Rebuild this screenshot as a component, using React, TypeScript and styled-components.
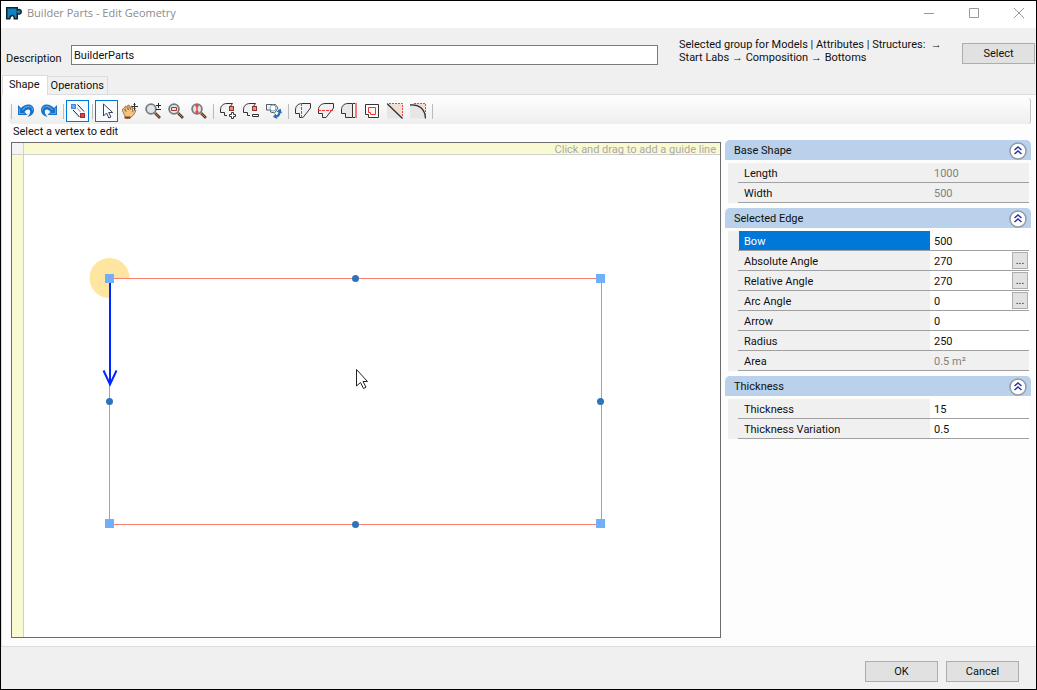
import React, { useState } from 'react';
import styled, { createGlobalStyle, css } from 'styled-components';

const GlobalStyle = createGlobalStyle`
  *, *::before, *::after { box-sizing: border-box; }
  body {
    margin: 0;
    background: #f0f0f0;
    color: #101010;
    font: 11px/14px Roboto, "Liberation Sans", sans-serif;
  }
  button, input { font: inherit; color: inherit; }
`;

const Window = styled.div`
  display: flex;
  flex-direction: column;
  min-height: 100vh;
  border: 1px solid #000;
  background: #f0f0f0;
`;

const TitleBar = styled.header`
  display: flex;
  align-items: center;
  height: 27px;
  padding: 0 11px 4px 5px;
  background: #fff;
`;

const Title = styled.h1`
  flex: 1;
  margin: 0 0 0 5px;
  font: 11px/16px "Open Sans", "Noto Sans", sans-serif;
  color: #8c8c8c;
`;

const WindowControls = styled.div`
  display: flex;
  gap: 33px;
`;

const WindowButton = styled.button`
  display: flex;
  width: 12px;
  height: 12px;
  padding: 0;
  border: 0;
  background: none;
`;

const DetailsBar = styled.div`
  display: flex;
  align-items: flex-start;
  height: 47px;
  padding: 9px 1px 0 5px;
`;

const DescriptionLabel = styled.label`
  width: 65px;
  margin-top: 15px;
`;

const DescriptionInput = styled.input`
  flex: 1;
  min-width: 0;
  height: 20px;
  margin-top: 8px;
  padding: 0 2px;
  border: 1px solid #7a7a7a;
  background: #fff;
`;

const GroupPath = styled.p`
  width: 272px;
  margin: 1px 11px 0 21px;
  line-height: 13px;
  white-space: nowrap;
`;

const PathArrow = styled.span`
  font-family: "Liberation Sans", sans-serif;
`;

const PushButton = styled.button`
  width: 73px;
  height: 21px;
  padding: 0;
  border: 1px solid #adadad;
  background: #e1e1e1;
`;

const SelectButton = styled(PushButton)`
  margin-top: 6px;
`;

const TabStrip = styled.div`
  display: flex;
  align-items: flex-end;
  height: 20px;
  padding-left: 1px;
  border-bottom: 1px solid #dcdcdc;
`;

const Tab = styled.button<{ $active?: boolean }>`
  height: ${p => (p.$active ? 20 : 18)}px;
  margin-bottom: ${p => (p.$active ? -1 : 0)}px;
  padding: ${p => (p.$active ? '0 7px 2px 6px' : '0 3px')};
  border: 1px solid #dcdcdc;
  border-bottom: 0;
  border-left-width: ${p => (p.$active ? 1 : 0)}px;
  background: ${p => (p.$active ? '#fff' : '#f0f0f0')};
`;

const Page = styled.main`
  display: flex;
  flex: 1;
  flex-direction: column;
  padding: 3px 5px 8px 7px;
  border-left: 1px solid #dcdcdc;
  border-bottom: 1px solid #dcdcdc;
  background: #fdfdfd;
`;

const Toolbar = styled.div`
  display: flex;
  align-items: center;
  height: 26px;
  border-right: 1px solid #c4c4c4;
  border-radius: 3px;
  background: linear-gradient(#fdfdfd, #eeeeee);
`;

const Separator = styled.span<{ $first?: boolean }>`
  width: 1px;
  height: 15px;
  margin: 0 2px 0 ${p => (p.$first ? 2 : 3)}px;
  background: #b9bcbc;
`;

const ToolButton = styled.button<{ $pressed?: boolean }>`
  display: flex;
  align-items: center;
  justify-content: center;
  width: 23px;
  height: 22px;
  padding: 0;
  border: 1px solid ${p => (p.$pressed ? '#0078d7' : 'transparent')};
  background: ${p => (p.$pressed ? '#f8fbfd' : 'none')};
`;

const Hint = styled.p`
  margin: 0;
  padding: 1px 4px 3px;
`;

const Workspace = styled.div`
  display: flex;
  flex: 1;
  padding-left: 2px;
`;

const DrawingArea = styled.section`
  position: relative;
  display: grid;
  flex: 1;
  grid-template: 12px 1fr / 12px 1fr;
  min-width: 0;
  border: 1px solid #6c6c6c;
  background: #fff;
`;

const RulerCorner = styled.div`
  border: solid #d0d0d0;
  border-width: 0 1px 1px 0;
  background: #f4f4f4;
`;

const TopRuler = styled.div`
  padding-right: 4px;
  border-bottom: 1px solid #d0d0d0;
  background: #fafad2;
  color: #a9a9a9;
  line-height: 14px;
  text-align: right;
`;

const SideRuler = styled.div`
  border-right: 1px solid #d0d0d0;
  background: #fafad2;
`;

const Drawing = styled.svg`
  position: absolute;
  top: 0;
  left: 0;
  width: 100%;
  height: 100%;
`;

const Properties = styled.aside`
  display: flex;
  flex-direction: column;
  gap: 5px;
  width: 306px;
  margin: -2px 0 0 4px;
`;

const GroupHeader = styled.h2`
  display: flex;
  align-items: center;
  justify-content: space-between;
  height: 20px;
  margin: 0 0 3px;
  padding: 2px 4px 0 9px;
  border-radius: 5px 5px 0 0;
  background: #b9d1ea;
  font: inherit;
`;

const CollapseButton = styled.button`
  display: flex;
  width: 18px;
  height: 18px;
  padding: 0;
  border: 0;
  background: none;
`;

const Rows = styled.div`
  margin: 0 2px 0 3px;
  padding-left: 10px;
  background: #f0f0f0;
`;

const Row = styled.div`
  display: flex;
  height: 20px;
  border-bottom: 1px solid #a0a0a0;
`;

const RowLabel = styled.label<{ $selected?: boolean }>`
  flex: 1;
  padding: 4px 0 0 6px;
  ${p => p.$selected && css`
    border-left: 1px solid #f0f0f0;
    padding-left: 5px;
    background: #0078d7;
    color: #fff;
  `}
`;

const RowValue = styled.div<{ $locked?: boolean }>`
  display: flex;
  width: 99px;
  padding-right: 1px;
  background: ${p => (p.$locked ? '#f0f0f0' : '#fff')};
`;

const ValueInput = styled.input`
  flex: 1;
  min-width: 0;
  padding: 3px 4px 0;
  border: 0;
  background: none;
  &:read-only { color: #808080; }
  &:focus { outline: none; }
`;

const MoreButton = styled.button`
  width: 16px;
  height: 17px;
  margin-top: 1px;
  padding: 0;
  border: 1px solid #adadad;
  background: #e1e1e1;
`;

const Footer = styled.footer`
  display: flex;
  justify-content: flex-end;
  gap: 8px;
  padding: 14px 17px 7px;
`;

const shapeOutline = 'M.5 10.500V7C.5 3 3 .7 7 .5h8.500v4.500L8 14.500H4.500v-4z';

function Icon({ children }: { children: React.ReactNode }) {
  return <svg width="16" height="16" viewBox="0 0 16 16" fill="none" aria-hidden="true">{children}</svg>;
}

function Lens({ children }: { children: React.ReactNode }) {
  return (
    <Icon>
      <path d="M10 10l5 5" stroke="#5a3a2a" strokeWidth="2.600" />
      <path d="M10 10l4.500 4.500" stroke="#a77b56" />
      <circle cx="6" cy="6" r="4.900" fill="#dfe4e6" stroke="#777b7e" strokeWidth="1.800" />
      {children}
    </Icon>
  );
}

const UndoArrow = () => (
  <>
    <path d="M0 2v10h9.500L6.500 9C8 6 12 5.500 12.200 8.500c.1 2-1 3.500-3 5.500C13.500 13 16 10.500 16 7 16 .5 7.500-.5 3 5z" fill="#1672c8" />
    <path d="M1.500 5v5.500h5M4.500 7c4-5.500 10.300-4 10 .5" stroke="#4fa3ea" strokeWidth="1.200" />
  </>
);

const icons: Record<string, React.ReactNode> = {
  Undo: <Icon><UndoArrow /></Icon>,
  Redo: <Icon><g transform="matrix(-1 0 0 1 16 0)"><UndoArrow /></g></Icon>,
  'Edit vertices': (
    <Icon>
      <rect x="1.500" y="1.500" width="4" height="4" fill="#70abf5" stroke="#4c87cf" />
      <rect x="10.500" y="10.500" width="4" height="4" fill="#d94343" stroke="#a92c2c" />
      <path d="M7.500 1.500l6.500 7M3 7l6.500 7" stroke="#222" />
      <path d="M7.500 5.500l3 3.500" stroke="#555" strokeDasharray="1.500 1" />
    </Icon>
  ),
  Pointer: <Icon><path d="M4.500 1v12l3-3 2.300 5 2.200-1-2.300-4.500h4z" fill="#fff" stroke="#34415e" /></Icon>,
  Pan: (
    <Icon>
      <path d="M0 6.500l1.500-1 2.500 3L2.500 4 4 3l2.500 4-1-4.500L7 2l1.500 4.500.5-3.500 1.500.5v5l2.500-1.500 1 .5-2.500 4.500-3.500 3-4 .5L2 11z" fill="#f0c37f" stroke="#94602d" strokeWidth=".8" />
      <path d="M12.500 0v7M9.500 3.500h6.500M11.500 1.500l1-1 1 1M11.500 5.500l1 1 1-1" stroke="#333" />
      <path d="M2.500 14.500h6" stroke="#7a451f" strokeWidth="2" />
    </Icon>
  ),
  'Zoom in or out': <Lens><path d="M11 2.500h5M13.500 0v5M11 6.500h5" stroke="#222" /></Lens>,
  'Zoom to window': <Lens><path d="M3.500 4.500h5v3h-5z" stroke="#b23333" /></Lens>,
  'Zoom to height': <Lens><path d="M6 2v8M4.500 3.500L6 2l1.500 1.500M4.500 8.500L6 10l1.500-1.500" stroke="#ee4343" strokeWidth="1.500" /></Lens>,
  'Add vertex': (
    <Icon>
      <path d="M7 12.500H4.500v-3h-4V7C.5 3 3 .5 7 .5h5.500L10 4" fill="#f0f2f3" stroke="#3a3032" />
      <rect x="9.500" y="3.500" width="4" height="4" fill="#f09070" stroke="#8b3530" />
      <path d="M11.500 9.500h2v2h2v2h-2v2h-2v-2h-2v-2h2z" fill="#fff" stroke="#3a3032" />
    </Icon>
  ),
  'Remove vertex': (
    <Icon>
      <path d="M7 12.500H4.500v-3h-4V7C.5 3 3 .5 7 .5h5.500L10 4" fill="#f0f2f3" stroke="#3a3032" />
      <rect x="9.500" y="3.500" width="4" height="4" fill="#f09070" stroke="#8b3530" />
      <path d="M9.500 11.500h6v2h-6z" fill="#fff" stroke="#3a3032" />
    </Icon>
  ),
  'Rotate shape': (
    <Icon>
      <path d="M.5 1.500h9l2.500 3.500-3.500 5-4-1v-2h-4z" fill="#eef3f6" stroke="#52606a" />
      <circle cx="7" cy="5" r="3" fill="#fff" stroke="#88a8bd" />
      <path d="M9 13.500c3 0 4.500-2 4.500-4.500" stroke="#286eb5" strokeWidth="2.200" />
      <path d="M10.500 8.500l4-3 1.500 5zM9.500 10.500L7 14l4.500 2z" fill="#286eb5" />
    </Icon>
  ),
  'Mirror vertically': <Icon><path d={shapeOutline} fill="#f0f1f2" stroke="#3a3032" /><path d="M6.500 0v16" stroke="#e33" strokeDasharray="3 1" /></Icon>,
  'Mirror horizontally': <Icon><path d={shapeOutline} fill="#f0f1f2" stroke="#3a3032" /><path d="M0 7.500h16" stroke="#e33" strokeDasharray="3 1" /></Icon>,
  'Extend side': (
    <Icon>
      <path d="M.5 10.500V7C.5 3 3 .500 7 .500h4.500v14h-7v-4z" fill="#e7e9ea" stroke="#3a3032" />
      <path d="M12 .5h2M12 14.500h2" stroke="#3a3032" />
      <path d="M15 0v15" stroke="#e55" strokeWidth="1.500" />
    </Icon>
  ),
  'Offset outline': (
    <Icon>
      <path d="M1.500 1.500h13v13h-10v-3h-3z" fill="#fff" stroke="#3a3032" />
      <path d="M4.500 4.500h7v7h-5v-2h-2z" fill="#fff5f2" stroke="#e33" />
    </Icon>
  ),
  'Chamfer corner': (
    <Icon>
      <path d="M0 .5L15.500 15.500H0z" fill="#e6e6e6" />
      <path d="M1 .5h14.500v15z" fill="#f0dfd2" />
      <path d="M0 .5L15.500 15.500" stroke="#3a3032" strokeWidth="1.300" />
      <path d="M2 .5h13.500v14" stroke="#e44" strokeDasharray="2 1" />
    </Icon>
  ),
  'Round corner': (
    <Icon>
      <path d="M0 1.500c9-1 15 5 15.500 14H0z" fill="#e6e6e6" />
      <path d="M2 .5h13.500v13C14 7 10 2 2 1.500z" fill="#f0dfd2" />
      <path d="M0 2c9-1 15 4 15.500 13.500" stroke="#3a3032" strokeWidth="1.300" />
      <path d="M4 .5h11.500v12" stroke="#e44" strokeDasharray="2 1" />
    </Icon>
  ),
};

const toolGroups = [
  ['Undo', 'Redo'],
  ['Edit vertices'],
  ['Pointer', 'Pan', 'Zoom in or out', 'Zoom to window', 'Zoom to height'],
  ['Add vertex', 'Remove vertex', 'Rotate shape'],
  ['Mirror vertically', 'Mirror horizontally', 'Extend side', 'Offset outline', 'Chamfer corner', 'Round corner'],
];

interface Property {
  label: string;
  value: string;
  locked?: boolean;
  more?: boolean;
}

const propertyGroups: { title: string; items: Property[] }[] = [
  {
    title: 'Base Shape',
    items: [
      { label: 'Length', value: '1000', locked: true },
      { label: 'Width', value: '500', locked: true },
    ],
  },
  {
    title: 'Selected Edge',
    items: [
      { label: 'Bow', value: '500' },
      { label: 'Absolute Angle', value: '270', more: true },
      { label: 'Relative Angle', value: '270', more: true },
      { label: 'Arc Angle', value: '0', more: true },
      { label: 'Arrow', value: '0' },
      { label: 'Radius', value: '250' },
      { label: 'Area', value: '0.5 m²', locked: true },
    ],
  },
  {
    title: 'Thickness',
    items: [
      { label: 'Thickness', value: '15' },
      { label: 'Thickness Variation', value: '0.5' },
    ],
  },
];

function ShapeDrawing() {
  const vertices = [[97, 135], [588, 135], [97, 380], [588, 380]];
  const midpoints = [[343, 135], [97, 258], [588, 258], [343, 381]];
  return (
    <Drawing role="img" aria-label="Rectangle with its left edge selected">
      <path d="M97.500 155A20 20 0 1 1 117.500 135H97.500z" fill="#ffe6a0" />
      <path d="M97.500 135.500h492v246h-492z" fill="none" stroke="#fa8072" />
      <path d="M98 136v106" stroke="#0026ff" strokeWidth="2" />
      <path d="M91.500 227.500l6.500 14 6.500-14" fill="none" stroke="#0026ff" strokeWidth="2" />
      {vertices.map(([x, y]) => <rect key={`${x}-${y}`} x={x - 4} y={y - 4} width="9" height="9" fill="#70b0fa" />)}
      {midpoints.map(([x, y]) => <circle key={`${x}-${y}`} cx={x + 0.5} cy={y + 0.5} r="3.500" fill="#2b74bc" />)}
      <path d="M344.500 226.500v16.500l4-3.500 3 6 2.500-1.300-3-5.700h4.500z" fill="#fff" stroke="#222" />
    </Drawing>
  );
}

function PropertyGroup({ title, items, selected, onSelect }: {
  title: string;
  items: Property[];
  selected: string;
  onSelect: (label: string) => void;
}) {
  return (
    <section>
      <GroupHeader>
        {title}
        <CollapseButton aria-label={`Collapse ${title}`}>
          <svg width="18" height="18" viewBox="0 0 18 18" fill="none">
            <circle cx="9" cy="9" r="8" fill="#fff" stroke="#909aa5" strokeWidth="1.500" />
            <path d="M5.500 8L9 5l3.500 3M5.500 12L9 9l3.500 3" stroke="#28369c" strokeWidth="1.500" />
          </svg>
        </CollapseButton>
      </GroupHeader>
      <Rows>
        {items.map(item => {
          const id = `${title}-${item.label}`.replace(/ /g, '-');
          return (
            <Row key={item.label}>
              <RowLabel htmlFor={id} $selected={selected === id}>{item.label}</RowLabel>
              <RowValue $locked={item.locked}>
                <ValueInput id={id} defaultValue={item.value} readOnly={item.locked} onFocus={() => onSelect(id)} />
                {item.more && <MoreButton aria-label={`Choose ${item.label}`}>...</MoreButton>}
              </RowValue>
            </Row>
          );
        })}
      </Rows>
    </section>
  );
}

export default function App() {
  const [selected, setSelected] = useState('Selected-Edge-Bow');
  return (
    <>
      <GlobalStyle />
      <Window>
        <TitleBar>
          <svg width="16" height="14" viewBox="0 0 16 14" aria-hidden="true">
            <path d="M.75 1.750h10.500v2.500c2-1.500 4-.5 4 1.500s-2 3-4 1.500v5.500h-3c.5-4-4-4.500-4.500 0h-3z" fill="#0c84c4" stroke="#16222c" strokeWidth="1.500" />
          </svg>
          <Title>Builder Parts - Edit Geometry</Title>
          <WindowControls>
            <WindowButton aria-label="Minimize"><svg width="12" height="12"><path d="M1 6.500h10" stroke="#999" /></svg></WindowButton>
            <WindowButton aria-label="Maximize"><svg width="12" height="12"><path d="M1.500 1.500h9v9h-9z" fill="none" stroke="#999" /></svg></WindowButton>
            <WindowButton aria-label="Close"><svg width="12" height="12"><path d="M1 1l10 10M11 1L1 11" stroke="#999" /></svg></WindowButton>
          </WindowControls>
        </TitleBar>
        <DetailsBar>
          <DescriptionLabel htmlFor="description">Description</DescriptionLabel>
          <DescriptionInput id="description" defaultValue="BuilderParts" />
          <GroupPath>
            Selected group for Models | Attributes | Structures: &nbsp;<PathArrow>→</PathArrow><br />
            Start Labs <PathArrow>→</PathArrow> Composition <PathArrow>→</PathArrow> Bottoms
          </GroupPath>
          <SelectButton>Select</SelectButton>
        </DetailsBar>
        <TabStrip role="tablist">
          <Tab role="tab" aria-selected $active>Shape</Tab>
          <Tab role="tab" aria-selected={false}>Operations</Tab>
        </TabStrip>
        <Page>
          <Toolbar role="toolbar" aria-label="Shape tools">
            {toolGroups.map((group, index) => (
              <React.Fragment key={group[0]}>
                <Separator $first={index === 0} />
                {group.map(name => (
                  <ToolButton key={name} aria-label={name} $pressed={name === 'Edit vertices' || name === 'Pointer'}>
                    {icons[name]}
                  </ToolButton>
                ))}
              </React.Fragment>
            ))}
            <Separator />
          </Toolbar>
          <Hint>Select a vertex to edit</Hint>
          <Workspace>
            <DrawingArea>
              <RulerCorner />
              <TopRuler>Click and drag to add a guide line</TopRuler>
              <SideRuler />
              <ShapeDrawing />
            </DrawingArea>
            <Properties>
              {propertyGroups.map(group => (
                <PropertyGroup key={group.title} {...group} selected={selected} onSelect={setSelected} />
              ))}
            </Properties>
          </Workspace>
        </Page>
        <Footer>
          <PushButton>OK</PushButton>
          <PushButton>Cancel</PushButton>
        </Footer>
      </Window>
    </>
  );
}
